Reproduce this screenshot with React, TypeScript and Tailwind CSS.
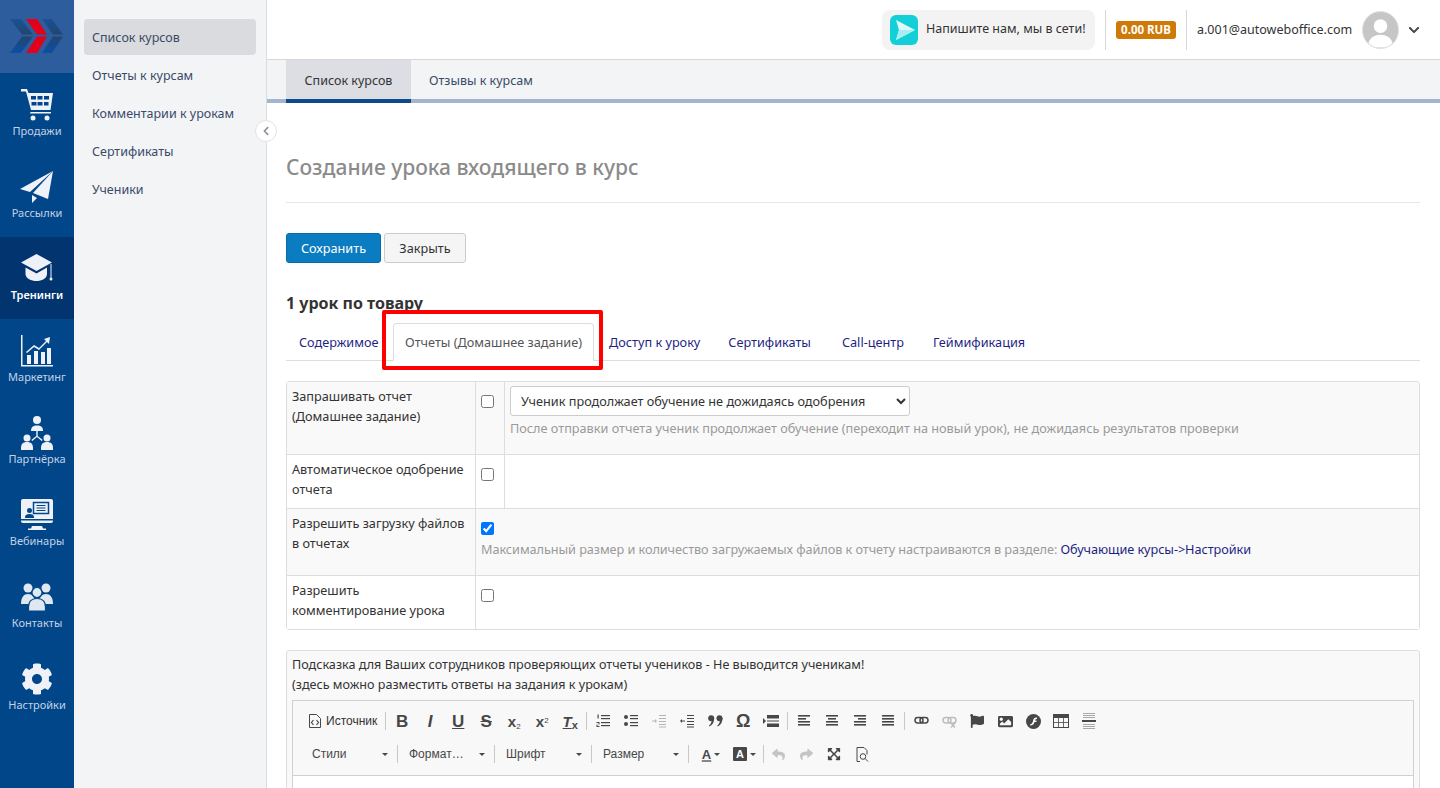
import type { ReactNode } from 'react';
import { FaCog, FaChevronDown, FaChevronLeft, FaFlag, FaImage, FaReply, FaShare, FaExpandArrowsAlt } from 'react-icons/fa';

// left rail icons
function CartIcon() {
  return (
    <svg width="32" height="32" viewBox="0 0 32 32" fill="#eef2f8">
      <path d="M0 0h6l1.500 4H32l-2.500 17H10L5 2.500H0z" />
      <path d="M9.500 23H30v1.500H9z" />
      <circle cx="12" cy="29" r="2.500" />
      <circle cx="26" cy="29" r="2.500" />
      <g fill="#02468a">
        <rect x="10" y="7" width="5" height="3.500" /><rect x="16.500" y="7" width="5" height="3.500" /><rect x="23" y="7" width="5" height="3.500" />
        <rect x="10.500" y="13" width="5" height="3.500" /><rect x="16.500" y="13" width="5" height="3.500" /><rect x="23" y="13" width="4.500" height="3.500" />
      </g>
    </svg>
  );
}

function PlaneIcon() {
  return (
    <svg width="34" height="32" viewBox="0 0 34 32" fill="#eef2f8">
      <path d="M33 0 0 18l10 3z" />
      <path d="M33 0 13 22l15 6z" />
      <path d="M12 24v8l5-5z" />
    </svg>
  );
}

function CapIcon() {
  return (
    <svg width="32" height="30" viewBox="0 0 32 30" fill="#eef2f8">
      <path d="M0 8.500 15.500 0 31 8.500 15.500 17z" />
      <path d="M4.500 13.500l11 6 10.500-6V20c0 4.500-5.500 7-10.500 7s-11-2.500-11-7z" />
      <rect x="29.500" y="10" width="1" height="14" />
      <circle cx="30" cy="25" r="1.500" />
    </svg>
  );
}

function UsersIcon() {
  return (
    <svg width="32" height="28" viewBox="0 0 32 28" fill="#dfe7f1">
      <circle cx="7" cy="5" r="4.500" />
      <circle cx="25" cy="5" r="4.500" />
      <path d="M0 21c0-7 3-10 7-10s7 3 7 10z" />
      <path d="M18 21c0-7 3-10 7-10s7 3 7 10z" />
      <circle cx="16" cy="9.500" r="5" stroke="#02468a" strokeWidth="1.200" />
      <path d="M7.500 28v-4c0-6 4-8.500 8.500-8.500s8.500 2.500 8.500 8.500v4z" stroke="#02468a" strokeWidth="1.200" />
    </svg>
  );
}

function ChartIcon() {
  return (
    <svg width="32" height="32" viewBox="0 0 32 32" fill="#eef2f8">
      <path d="M0 0h1.500v30H32v1.500H0z" />
      <rect x="6" y="20" width="4" height="9" /><rect x="13" y="16" width="4" height="13" /><rect x="20" y="17" width="4" height="12" /><rect x="26" y="13" width="4" height="16" />
      <path d="M5 17l8-7 5 3 7-7-2-2 6-2-1 7-2-2-8 8-5-3-7 6z" />
    </svg>
  );
}

function NetworkIcon() {
  return (
    <svg width="32" height="34" viewBox="0 0 32 34" fill="#eef2f8">
      <circle cx="16" cy="4" r="4" />
      <path d="M10 15c0-4 2-5.500 6-5.500s6 1.500 6 5.500z" />
      <circle cx="6" cy="22" r="3.500" />
      <path d="M0 34v-2c0-4 2-6 6-6s6 2 6 6v2z" />
      <circle cx="26" cy="22" r="3.500" />
      <path d="M20 34v-2c0-4 2-6 6-6s6 2 6 6v2z" />
      <path d="M15.300 15h1.400v5l5 4-1 1-4.700-4-4.700 4-1-1 5-4z" />
    </svg>
  );
}

function WebinarIcon() {
  return (
    <svg width="32" height="32" viewBox="0 0 32 32">
      <rect width="32" height="24" rx="2" fill="#eef2f8" />
      <rect x="0" y="20" width="32" height="1.500" fill="#02468a" />
      <path d="M11 27h10l1 2.500h3V31H7v-1.500h3z" fill="#eef2f8" />
      <circle cx="8.500" cy="11.500" r="2.500" fill="#02468a" />
      <path d="M4 19v-1c0-2 2-3 4.500-3s4.500 1 4.500 3v1z" fill="#02468a" />
      <rect x="12.500" y="3.500" width="15" height="11" fill="none" stroke="#02468a" strokeWidth="1.500" />
      <path d="M15.500 6.500h9M15.500 9h9M15.500 11.500h9" stroke="#02468a" strokeWidth="1.200" />
    </svg>
  );
}

function Logo() {
  return (
    <svg width="53" height="34" viewBox="0 0 53 34">
      <defs>
        <linearGradient id="chevTop" x1="0" y1="0" x2="0" y2="1">
          <stop offset="0" stopColor="#1a5296" />
          <stop offset="1" stopColor="#22456f" />
        </linearGradient>
        <linearGradient id="chevBottom" x1="0" y1="0" x2="0" y2="1">
          <stop offset="0" stopColor="#22456f" />
          <stop offset="1" stopColor="#0a4fa8" />
        </linearGradient>
      </defs>
      <path d="M0 0h11l12 15.500H12z" fill="url(#chevTop)" />
      <path d="M12 17.500h11L11 34H0z" fill="url(#chevBottom)" />
      <path d="M32 0h10l11 15.500H43z" fill="url(#chevTop)" />
      <path d="M43 17.500h10L42 34H32z" fill="url(#chevBottom)" />
      <path d="M16 0h11l10 15.500H27z" fill="#e3001b" />
      <path d="M27 17.500h10L27 34H16z" fill="#e3001b" />
    </svg>
  );
}

function RailItem({ icon, label, active }: { icon: ReactNode; label: string; active?: boolean }) {
  return (
    <div className={`h-[82px] flex flex-col items-center pt-[15px] ${active ? 'bg-[#02356f]' : ''}`}>
      <div className="h-[34px] flex items-center justify-center">{icon}</div>
      <span className={`mt-[1px] text-[11px] leading-[16px] ${active ? 'text-white font-semibold' : 'text-[#c3d2e4]'}`}>{label}</span>
    </div>
  );
}

// editor toolbar bits
const iconColor = '#474747';

function Lines({ rows }: { rows: [number, number][] }) {
  return (
    <svg width="14" height="14" viewBox="0 0 14 14" fill={iconColor}>
      {rows.map(([x, w], i) => (
        <rect key={i} x={x} y={1 + i * 3} width={w} height="1.600" />
      ))}
    </svg>
  );
}

function LinkGlyph({ color, cross }: { color: string; cross?: boolean }) {
  return (
    <svg width="15" height="14" viewBox="0 0 15 14" fill="none" stroke={color}>
      <rect x="1" y="3.500" width="8" height="5.500" rx="2.700" strokeWidth="1.500" />
      <rect x="6" y="3.500" width="8" height="5.500" rx="2.700" strokeWidth="1.500" />
      {cross && <path d="m9 9 4 4.500M13 9l-4 4.500" strokeWidth="1.500" />}
    </svg>
  );
}

function Btn({ children }: { children: ReactNode }) {
  return <div className="w-7 h-6 flex items-center justify-center shrink-0 text-[#474747]">{children}</div>;
}

function Sep() {
  return <div className="w-px h-[18px] bg-[#c8c8c8] shrink-0" />;
}

function Arrow() {
  return <div className="w-0 h-0 border-l-[3px] border-r-[3px] border-t-[3px] border-l-transparent border-r-transparent border-t-[#474747] shrink-0" />;
}

function Combo({ label }: { label: string }) {
  return (
    <>
      <div className="w-[96px] h-6 pl-[11px] pr-[9px] flex items-center justify-between shrink-0">
        <span className="text-[12px] text-[#474747]">{label}</span>
        <Arrow />
      </div>
      <Sep />
    </>
  );
}

const letter = "text-[17px] leading-none";

function Toolbar() {
  return (
    <div className="h-[75px] bg-[#f8f8f8] border-b border-[#d1d1d1] pl-[2px] pt-[8px] font-['Liberation_Sans',sans-serif]">
      <div className="flex items-center h-6 pl-[12px]">
        <svg width="14" height="16" viewBox="0 0 14 16" fill="none" stroke="#474747" className="mr-[4px] ml-[1px]">
          <path d="M1.500 1.500h7l4 4v9h-11z" />
          <path d="M5.500 7 3.500 9.500l2 2.500M8.500 7l2 2.500-2 2.500" strokeWidth="1.200" />
        </svg>
        <span className="text-[12px] text-[#333] mr-[8px]">Источник</span>
        <Sep />
        <div className="w-[2px]" />
        <Btn><span className={`${letter} font-bold`}>B</span></Btn>
        <Btn><span className={`${letter} font-bold italic`}>I</span></Btn>
        <Btn><span className={`${letter} font-bold underline`}>U</span></Btn>
        <Btn><span className={`${letter} font-bold line-through`}>S</span></Btn>
        <Btn><span className="text-[15px] font-bold leading-none">x<sub className="text-[8px] font-normal">2</sub></span></Btn>
        <Btn><span className="text-[15px] font-bold leading-none">x<sup className="text-[8px] font-normal">2</sup></span></Btn>
        <Btn><span className="text-[15px] font-bold italic underline leading-none">T<sub className="text-[11px] not-italic no-underline inline-block">x</sub></span></Btn>
        <div className="w-[2px]" />
        <Sep />
        <div className="w-[2px]" />
        <Btn>
          <svg width="14" height="14" viewBox="0 0 14 14" fill={iconColor}>
            <rect x="5" y="1" width="9" height="1.200" /><rect x="5" y="4" width="9" height="1.200" /><rect x="5" y="8" width="9" height="1.200" /><rect x="5" y="11" width="9" height="1.200" />
            <rect x="1.500" y="0.500" width="1.200" height="4" /><rect x="0.500" y="8" width="3" height="1" /><rect x="0.500" y="12" width="3" height="1" /><rect x="2.500" y="9" width="1" height="1.500" /><rect x="0.500" y="10.500" width="1" height="1.500" />
          </svg>
        </Btn>
        <Btn>
          <svg width="14" height="14" viewBox="0 0 14 14" fill={iconColor}>
            <circle cx="2" cy="3" r="2" /><circle cx="2" cy="10" r="2" />
            <rect x="6" y="1" width="8" height="1.200" /><rect x="6" y="4" width="8" height="1.200" /><rect x="6" y="8" width="8" height="1.200" /><rect x="6" y="11" width="8" height="1.200" />
          </svg>
        </Btn>
        <Btn>
          <svg width="14" height="14" viewBox="0 0 14 14" fill="#b5b5b5">
            <rect x="7" y="1" width="7" height="1" /><rect x="7" y="4" width="7" height="1" /><rect x="7" y="7" width="7" height="1" /><rect x="7" y="10" width="7" height="1" /><rect x="7" y="12.500" width="7" height="1" />
            <path d="M0 6.500h3V5l2 2-2 2V7.500H0z" />
          </svg>
        </Btn>
        <Btn>
          <svg width="14" height="14" viewBox="0 0 14 14" fill={iconColor}>
            <rect x="7" y="1" width="7" height="1" /><rect x="7" y="4" width="7" height="1" /><rect x="7" y="7" width="7" height="1" /><rect x="7" y="10" width="7" height="1" /><rect x="7" y="12.500" width="7" height="1" />
            <path d="M5 6.500H2V5L0 7l2 2V7.500h3z" />
          </svg>
        </Btn>
        <Btn>
          <svg width="15" height="12" viewBox="0 0 15 12" fill={iconColor}>
            <circle cx="3.200" cy="3.200" r="3" /><circle cx="11.500" cy="3.200" r="3" />
            <path d="M4 3h2.200c0 4-1.500 7-4.700 8.500L1 10.500c2-1.500 3-4 3-7.500zM12.300 3h2.200c0 4-1.500 7-4.700 8.500l-.5-1c2-1.500 3-4 3-7.500z" />
          </svg>
        </Btn>
        <Btn><span className="text-[18px] leading-none font-bold">Ω</span></Btn>
        <Btn>
          <svg width="16" height="12" viewBox="0 0 16 12" fill={iconColor}>
            <rect x="4" y="0" width="12" height="3.500" /><rect x="4" y="8.500" width="12" height="3.500" /><rect x="4" y="5.500" width="12" height="1" /><path d="M0 3l3 3-3 3z" />
          </svg>
        </Btn>
        <div className="w-[2px]" />
        <Sep />
        <div className="w-[2px]" />
        <Btn><Lines rows={[[1, 12], [1, 8], [1, 12], [1, 12]]} /></Btn>
        <Btn><Lines rows={[[1, 12], [3, 8], [1, 12], [1, 12]]} /></Btn>
        <Btn><Lines rows={[[1, 12], [5, 8], [1, 12], [1, 12]]} /></Btn>
        <Btn><Lines rows={[[1, 12], [1, 12], [1, 12], [1, 12]]} /></Btn>
        <div className="w-[2px]" />
        <Sep />
        <div className="w-[2px]" />
        <Btn><LinkGlyph color={iconColor} /></Btn>
        <Btn><LinkGlyph color="#bdbdbd" cross /></Btn>
        <Btn><FaFlag size={14} /></Btn>
        <Btn><FaImage size={15} /></Btn>
        <Btn>
          <svg width="15" height="15" viewBox="0 0 15 15"><circle cx="7.500" cy="7.500" r="7.500" fill={iconColor} /><path d="M11 3.500c-3 0-3.500 1.500-4 3.500s-1 3-3 3.500v1c3 0 4-1.500 4.500-3.500h2V6.500h-1.500C9 5.500 10 5 11 5z" fill="#f8f8f8" /></svg>
        </Btn>
        <Btn>
          <svg width="16" height="14" viewBox="0 0 16 14"><rect x="0.500" y="0.500" width="15" height="13" fill="none" stroke={iconColor} /><rect width="16" height="4" fill={iconColor} /><path d="M5.500 4v9M10.500 4v9M0 8.500h16" stroke={iconColor} strokeWidth="0.800" /></svg>
        </Btn>
        <Btn>
          <svg width="14" height="16" viewBox="0 0 14 16" fill="#a8a8a8">
            <rect x="1" y="0" width="12" height="1" /><rect x="1" y="2" width="12" height="1" /><rect x="1" y="4" width="12" height="1" />
            <rect x="0" y="7" width="14" height="2" fill={iconColor} />
            <rect x="1" y="11" width="12" height="1" /><rect x="1" y="13" width="12" height="1" /><rect x="1" y="15" width="12" height="1" />
          </svg>
        </Btn>
      </div>
      <div className="flex items-center h-6 mt-[9px] pl-[6px]">
        <Combo label="Стили" />
        <Combo label="Формат…" />
        <Combo label="Шрифт" />
        <Combo label="Размер" />
        <div className="w-[8px]" />
        <div className="flex items-center gap-[3px] w-[28px] justify-center">
          <span className="text-[13px] font-bold leading-none underline decoration-[#888] decoration-2 text-[#474747]">A</span>
          <Arrow />
        </div>
        <div className="w-[8px]" />
        <div className="flex items-center gap-[3px] w-[30px]">
          <span className="w-[14px] h-[14px] bg-[#474747] rounded-[1px] text-white text-[11px] font-bold leading-[14px] text-center">A</span>
          <Arrow />
        </div>
        <Sep />
        <Btn><span className="text-[#c4c4c4]"><FaReply size={13} /></span></Btn>
        <Btn><span className="text-[#c4c4c4]"><FaShare size={13} /></span></Btn>
        <Btn><FaExpandArrowsAlt size={14} /></Btn>
        <Btn>
          <svg width="13" height="15" viewBox="0 0 13 15" fill="none" stroke="#474747">
            <path d="M4 14.500H1V.500h7l3 3v4" />
            <circle cx="7" cy="9.500" r="2.800" />
            <path d="m9 11.500 3 3" />
          </svg>
        </Btn>
      </div>
    </div>
  );
}

function FormRow({ label, children, bg, h }: { label: ReactNode; children: ReactNode; bg: string; h: string }) {
  return (
    <div className={`flex border-b border-[#dddddd] last:border-b-0 ${bg} ${h}`}>
      <div className="w-[189px] shrink-0 border-r border-[#dddddd] px-[5px] pt-[4px] leading-[20px] text-[#333]">{label}</div>
      {children}
    </div>
  );
}

export default function App() {
  return (
    <div className="flex h-screen overflow-hidden bg-white text-[12.7px] text-[#333] font-['Noto_Sans',sans-serif]">
      {/* icon rail */}
      <aside className="w-[74px] shrink-0 bg-[#02468a]">
        <div className="h-[73px] bg-[#2d5d9d] flex items-start pl-[10px] pt-[19px]">
          <Logo />
        </div>
        <RailItem icon={<CartIcon />} label="Продажи" />
        <RailItem icon={<PlaneIcon />} label="Рассылки" />
        <RailItem icon={<CapIcon />} label="Тренинги" active />
        <RailItem icon={<ChartIcon />} label="Маркетинг" />
        <RailItem icon={<NetworkIcon />} label="Партнёрка" />
        <RailItem icon={<WebinarIcon />} label="Вебинары" />
        <RailItem icon={<UsersIcon />} label="Контакты" />
        <RailItem icon={<FaCog size={32} color="#eef2f8" />} label="Настройки" />
      </aside>

      {/* secondary menu */}
      <nav className="relative w-[193px] shrink-0 bg-[#f3f4f6] border-r border-[#dcdcdc] pt-[19px] pl-[10px] pr-[10px] text-[12.5px] text-[#3a4a68]">
        <div className="h-9 bg-[#dadbdf] rounded-[4px] flex items-center px-2 pt-[3px] mb-[2px]">Список курсов</div>
        <div className="h-9 flex items-center px-2 pt-[3px] mb-[2px]">Отчеты к курсам</div>
        <div className="h-9 flex items-center px-2 pt-[3px] mb-[2px]">Комментарии к урокам</div>
        <div className="h-9 flex items-center px-2 pt-[3px] mb-[2px]">Сертификаты</div>
        <div className="h-9 flex items-center px-2 pt-[3px]">Ученики</div>
        <div className="absolute -right-[11px] top-[120px] w-[22px] h-[22px] rounded-full bg-white border border-[#e3e3e3] flex items-center justify-center text-[#8a8f99]">
          <FaChevronLeft size={10} />
        </div>
      </nav>

      <main className="flex-1 min-w-0">
        <header className="h-[60px] border-b border-[#d8d8d8] flex items-center justify-end pr-[20px]">
          <div className="h-[40px] w-[213px] bg-[#f3f3f3] rounded-[8px] flex items-center pl-[8px]">
            <svg width="28" height="30" viewBox="0 0 28 30" className="mr-[8px]">
              <rect width="28" height="30" rx="6" fill="#13d0d8" />
              <path d="M6 5l19 10L6 25l3-10z" fill="#dffafa" />
              <path d="M9 15h16L6 25z" fill="#a8eef0" />
            </svg>
            <span className="text-[12.5px] text-[#333]">Напишите нам, мы в сети!</span>
          </div>
          <div className="w-px h-[40px] bg-[#d8d8d8] ml-[10px]" />
          <span className="ml-[10px] h-[18px] w-[60px] rounded-[3px] bg-[#cf7a06] text-white text-[11.5px] font-bold leading-[18px] text-center">0.00 RUB</span>
          <div className="w-px h-[40px] bg-[#d8d8d8] ml-[10px]" />
          <span className="ml-[10px] w-[155px] pt-[1px] whitespace-nowrap text-[12.5px] text-[#333]">a.001@autoweboffice.com</span>
          <div className="ml-[10px] w-[37px] h-[38px] rounded-full bg-[#c6c6c6] border border-[#e3e3e3] overflow-hidden">
            <svg width="35" height="36" viewBox="0 0 36 36" fill="#fff">
              <circle cx="18" cy="14" r="7" />
              <path d="M5 36c0-9 6-13 13-13s13 4 13 13z" />
            </svg>
          </div>
          <div className="ml-[9px] text-[#444]"><FaChevronDown size={12} /></div>
        </header>

        <div className="h-[43px] bg-[#f3f4f6] border-b-4 border-[#a3b4cc] pl-[19px] flex text-[12.5px]">
          <div className="h-[43px] w-[125px] bg-[#dcdee3] border-b-4 border-[#0d4a8a] flex items-center justify-center pt-[4px]">Список курсов</div>
          <div className="h-[39px] px-[18px] flex items-center pt-[4px] text-[#3a4a68]">Отзывы к курсам</div>
        </div>

        <div className="relative pt-[48px] pl-[19px] pr-[20px]">
          <h1 className="text-[21px] leading-[32px] font-medium text-[#8b8b8b]">Создание урока входящего в курс</h1>
          <div className="mt-[19px] border-t border-[#e6e6e6]" />
          <div className="mt-[30px] flex gap-[3px]">
            <button className="h-[30px] w-[95px] rounded-[3px] bg-[#0a7cc1] border border-[#0a6aa5] text-white pt-[1px]">Сохранить</button>
            <button className="h-[30px] w-[82px] rounded-[3px] bg-[#f5f5f5] border border-[#cccccc] text-[#333] pt-[1px]">Закрыть</button>
          </div>
          <h2 className="mt-[29px] text-[16px] leading-[22px] font-bold text-[#333]">1 урок по товару</h2>

          <div className="mt-[9px] h-[38px] border-b border-[#dddddd] flex text-[#1f1f84]">
            <div className="w-[107px] pl-[13px] flex items-center h-[37px] pt-[2px]">Содержимое</div>
            <div className="h-[38px] w-[201px] bg-white border border-[#dddddd] border-b-white rounded-t-[4px] flex items-center justify-center text-[#555] pt-[1px]">Отчеты (Домашнее задание)</div>
            <div className="pl-[15px] pr-[14px] flex items-center h-[37px] pt-[2px]">Доступ к уроку</div>
            <div className="pl-[14px] pr-[16px] flex items-center h-[37px] pt-[2px]">Сертификаты</div>
            <div className="pl-[15px] pr-[14px] flex items-center h-[37px] pt-[2px]">Call-центр</div>
            <div className="pl-[15px] flex items-center h-[37px] pt-[2px]">Геймификация</div>
          </div>

          <div className="mt-[20px] border border-[#dddddd] rounded-[3px]">
            <FormRow label={<>Запрашивать отчет<br />(Домашнее задание)</>} bg="bg-[#f9f9f9]" h="h-[73px]">
              <div className="w-[29px] shrink-0 border-r border-[#dddddd] pl-[5px] pt-[13px]">
                <input type="checkbox" className="block w-[13px] h-[13px]" />
              </div>
              <div className="flex-1 pl-[5px] pt-[4px]">
                <select className="block w-[400px] h-[30px] pl-[6px] pr-[2px] bg-white border border-[#cccccc] rounded-[3px] text-[#333]">
                  <option>Ученик продолжает обучение не дожидаясь одобрения</option>
                </select>
                <p className="mt-[2px] leading-[20px] text-[#999]">После отправки отчета ученик продолжает обучение (переходит на новый урок), не дожидаясь результатов проверки</p>
              </div>
            </FormRow>
            <FormRow label={<>Автоматическое одобрение<br />отчета</>} bg="bg-white" h="h-[54px]">
              <div className="w-[29px] shrink-0 border-r border-[#dddddd] pl-[5px] pt-[13px]">
                <input type="checkbox" className="block w-[13px] h-[13px]" />
              </div>
            </FormRow>
            <FormRow label={<>Разрешить загрузку файлов<br />в отчетах</>} bg="bg-[#f9f9f9]" h="h-[67px]">
              <div className="flex-1 pl-[5px] pt-[13px]">
                <input type="checkbox" defaultChecked className="block w-[13px] h-[13px]" />
                <p className="mt-[4px] leading-[20px] tracking-[-0.06px] text-[#999]">Максимальный размер и количество загружаемых файлов к отчету настраиваются в разделе: <span className="text-[#1f1f84]">Обучающие курсы-&gt;Настройки</span></p>
              </div>
            </FormRow>
            <FormRow label={<>Разрешить<br />комментирование урока</>} bg="bg-white" h="h-[53px]">
              <div className="pl-[5px] pt-[13px]">
                <input type="checkbox" className="block w-[13px] h-[13px]" />
              </div>
            </FormRow>
          </div>

          <div className="mt-[20px] bg-[#f9f9f9] border border-[#dddddd] rounded-[3px] px-[5px] pt-[4px]">
            <p className="leading-[20px] text-[12.6px]">Подсказка для Ваших сотрудников проверяющих отчеты учеников - Не выводится ученикам!<br />(здесь можно разместить ответы на задания к урокам)</p>
            <div className="mt-[5px] border border-[#d1d1d1] bg-white h-[200px]">
              <Toolbar />
            </div>
          </div>

          {/* red callout drawn over the tab */}
          <div className="absolute left-[115px] top-[207px] w-[221px] h-[60px] border-[4px] border-[#ff0000] rounded-[2px] pointer-events-none" />
        </div>
      </main>
    </div>
  );
}
